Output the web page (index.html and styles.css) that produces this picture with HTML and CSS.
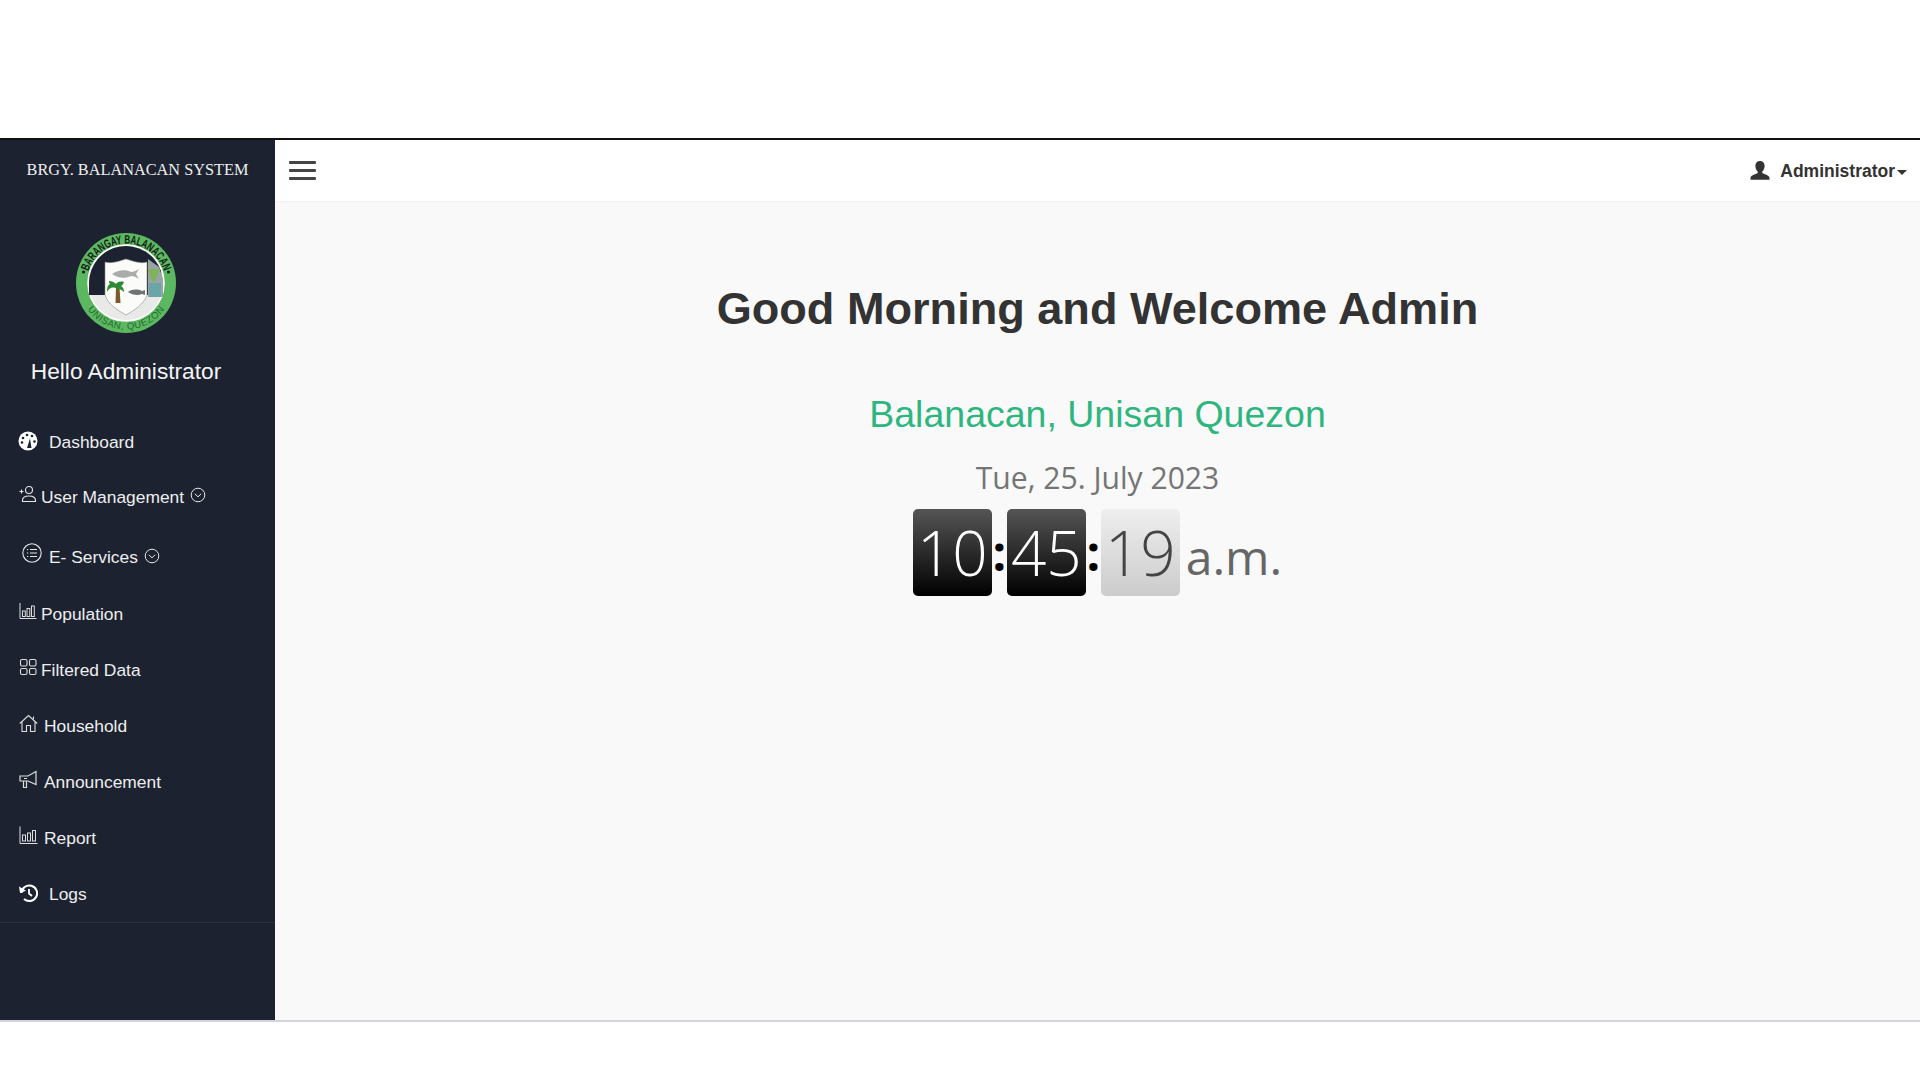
FILE: index.html
```html
<!DOCTYPE html>
<html lang="en">
<head>
    <meta charset="UTF-8">
    <title>Brgy. Balanacan System</title>
    <link rel="stylesheet" href="styles.css">
</head>
<body>

    <div class="app">
        <aside class="sidebar">
            <div class="brand">BRGY. BALANACAN SYSTEM</div>

            <div class="profile">
                <svg class="seal" viewBox="0 0 100 100">
                    <defs>
                        <path id="sealTop" d="M10.500 50a39.500 39.500 0 0 1 79 0"/>
                        <path id="sealBottom" d="M3.500 50a46.500 46.500 0 0 0 93 0"/>
                    </defs>
                    <circle cx="50" cy="50" r="50" fill="#5cb860"/>
                    <circle cx="50" cy="50" r="38" fill="#e9e9e7" stroke="#fff" stroke-width="1.500"/>
                    <path d="M13 62V50a37 37 0 0 1 72 -12l2 24z" fill="#1c2230"/>
                    <path d="M72 26l11 8 4 12 0 18h-15z" fill="#9aa3a6"/>
                    <path d="M72 36h12l-4 10-3 3-2-3z" fill="#7fb35a"/>
                    <path d="M73 50h12v14h-12z" fill="#6aa6a8"/>
                    <path d="M29 29c7 2 14 -1 21 -3 7 2 14 5 21 3v33c-3 9 -12 15 -21 20 -9 -5 -18 -11 -21 -20z" fill="#fbfbfa" stroke="#8a8a86" stroke-width=".6"/>
                    <path d="M36 41c5 -4 14 -5 19 -2 2 0 5 -1 8 -3l-3 5 3 5c-3 -2 -5 -3 -8 -3 -6 3 -14 2 -19 -2z" fill="#a8adab"/>
                    <path d="M52 59c4 -3 10 -3 14 -1l3 -1v5l-3 -1c-4 2 -10 1 -14 -2z" fill="#6f7472"/>
                    <path d="M40 54h3.500l1 16h-5z" fill="#7a5a2a"/>
                    <path d="M41 56c-4 -3 -8 -1 -10 3 0 -5 1 -7 3 -8 -1 -1 -1 -2 -1 -3 3 0 5 1 7 3 1 -2 4 -3 8 -2 -1 2 -1 3 -3 4 2 1 3 3 3 6 -2 -2 -4 -3 -7 -3z" fill="#2e8a34"/>
                    <text class="seal-top"><textPath href="#sealTop" startOffset="50%" text-anchor="middle" textLength="100" lengthAdjust="spacingAndGlyphs">BARANGAY BALANACAN</textPath></text>
                    <text class="seal-bottom"><textPath href="#sealBottom" startOffset="50%" text-anchor="middle" textLength="90">UNISAN, QUEZON</textPath></text>
                    <circle cx="7.500" cy="39" r="1.500" fill="#111"/>
                    <circle cx="92.500" cy="39" r="1.500" fill="#111"/>
                </svg>
                <p class="hello">Hello Administrator</p>
            </div>

            <ul class="menu">
                <li class="menu-item">
                    <svg class="icon icon-wide" viewBox="0 0 20 20"><circle cx="10" cy="10" r="9.500" fill="#fff"/><path d="M9 17l3-9.500 1.500 9.500z" fill="#1c2230"/><circle cx="5" cy="7" r="1.300" fill="#1c2230"/><circle cx="9" cy="4" r="1.300" fill="#1c2230"/><circle cx="14" cy="5" r="1.300" fill="#1c2230"/><circle cx="4" cy="11.500" r="1.300" fill="#1c2230"/><circle cx="16.500" cy="10.500" r="1.300" fill="#1c2230"/></svg>
                    <span>Dashboard</span>
                </li>
                <li class="menu-item item-user">
                    <svg class="icon" viewBox="0 0 18 18" fill="none" stroke="#e6e6e6" stroke-width="1.100"><circle cx="10" cy="5" r="3.500"/><path d="M3.500 16.500v-1c0-3 3-4.500 6.500-4.500s6.500 1.500 6.500 4.500v1z"/><path d="M.5 6.500h4M2.500 4.500v4"/></svg>
                    <span>User Management</span>
                    <svg class="chevron" viewBox="0 0 16 16" fill="none" stroke="#e6e6e6" stroke-width="1"><circle cx="8" cy="8" r="6.800"/><path d="M4.800 6.800l3.200 3 3.200-3"/></svg>
                </li>
                <li class="menu-item item-services">
                    <svg class="icon icon-circle" viewBox="0 0 20 20" fill="none" stroke="#e6e6e6" stroke-width="1.100"><circle cx="10" cy="10" r="9.200"/><path d="M8 6.500h7M8 10h7M8 13.500h7"/><path d="M5 6.500h1.200M5 10h1.200M5 13.500h1.200"/></svg>
                    <span>E- Services</span>
                    <svg class="chevron" viewBox="0 0 16 16" fill="none" stroke="#e6e6e6" stroke-width="1"><circle cx="8" cy="8" r="6.800"/><path d="M4.800 6.800l3.200 3 3.200-3"/></svg>
                </li>
                <li class="menu-item">
                    <svg class="icon" viewBox="0 0 18 18" fill="none" stroke="#ddd" stroke-width="1"><path d="M1 1v15.500h16.500"/><rect x="3.500" y="9" width="2.800" height="5.500"/><rect x="8" y="6.500" width="2.800" height="8"/><rect x="12.500" y="4" width="2.800" height="10.500"/></svg>
                    <span>Population</span>
                </li>
                <li class="menu-item">
                    <svg class="icon" viewBox="0 0 18 18" fill="none" stroke="#ddd" stroke-width="1.100"><rect x="1.500" y="1.500" width="6.500" height="6.500" rx="1.500"/><rect x="10.500" y="1.500" width="6.500" height="6.500" rx="1.500"/><rect x="1.500" y="10.500" width="6.500" height="6" rx="1.500"/><rect x="10.500" y="10.500" width="6.500" height="6" rx="1.500"/></svg>
                    <span>Filtered Data</span>
                </li>
                <li class="menu-item">
                    <svg class="icon icon-mid" viewBox="0 0 19 19" fill="none" stroke="#ddd" stroke-width="1.100"><path d="M.8 9.500L9.500 1.500l8.700 8M3 8v9.500h4.500v-6h4v6H16V8M14.500 5V2.500"/></svg>
                    <span>Household</span>
                </li>
                <li class="menu-item">
                    <svg class="icon icon-mid" viewBox="0 0 19 19" fill="none" stroke="#ddd" stroke-width="1.200"><path d="M1 6h8L17 1.500v13L9 11H1z"/><path d="M4.500 11v6.500h3V11M5 8.500h3"/></svg>
                    <span>Announcement</span>
                </li>
                <li class="menu-item">
                    <svg class="icon icon-mid" viewBox="0 0 19 19" fill="none" stroke="#ddd" stroke-width="1"><path d="M1 .5v17h17.500"/><rect x="3.500" y="9" width="3" height="6"/><rect x="8.500" y="7" width="3" height="8"/><rect x="13.500" y="4.500" width="3" height="10.500"/></svg>
                    <span>Report</span>
                </li>
                <li class="menu-item">
                    <svg class="icon icon-wide" viewBox="0 0 20 20" fill="none" stroke="#fff" stroke-width="2"><path d="M3.500 10a7.800 7.800 0 1 1 2.500 6"/><path d="M1 3.500l1 6.500 6-2.200z" fill="#fff" stroke="none"/><path d="M11 6v4.500l3 2.500" stroke-width="1.800"/></svg>
                    <span>Logs</span>
                </li>
            </ul>
        </aside>

        <div class="content">
            <header class="topbar">
                <button class="menu-toggle" aria-label="Menu"><span></span><span></span><span></span></button>
                <div class="user-menu">
                    <svg class="user-icon" viewBox="0 0 20 19"><path d="M10 0c3 0 4.600 2.300 4.600 5 0 2.300-1 4.500-2.300 5.500v1.800c2.700.9 6.700 2 7.200 4.500v2H.5v-2c.5-2.500 4.500-3.600 7.200-4.500v-1.800C6.400 9.500 5.400 7.300 5.400 5 5.400 2.300 7 0 10 0z" fill="#333"/></svg>
                    <span class="user-name">Administrator</span>
                    <span class="caret"></span>
                </div>
            </header>

            <main class="welcome">
                <h1>Good Morning and Welcome Admin</h1>
                <h2>Balanacan, Unisan Quezon</h2>
                <div class="date">Tue, 25. July 2023</div>
                <div class="clock">
                    <span class="digits">10</span>
                    <span class="colon">:</span>
                    <span class="digits">45</span>
                    <span class="colon">:</span>
                    <span class="digits seconds">19</span>
                    <span class="ampm">a.m.</span>
                </div>
            </main>
        </div>
    </div>

</body>
</html>
```

FILE: styles.css
```css
body {
    margin: 0;
    padding-top: 138px;
    font-family: 'Liberation Sans', Arial, sans-serif;
    background: white;
}
.app {
    display: flex;
    height: 884px;
    box-sizing: border-box;
    border-top: 2px solid #111;
    border-bottom: 2px solid #d2d3de;
}
.sidebar {
    width: 275px;
    background: #1c2230;
    color: #f2f2f2;
}
.brand {
    height: 60px;
    line-height: 60px;
    text-align: center;
    font-family: 'Liberation Serif', serif;
    font-size: 16.3px;
    color: #eee;
}
.profile {
    width: 252px;
    display: flex;
    flex-direction: column;
    align-items: center;
    padding-top: 33px;
}
.seal {
    width: 100px;
    height: 100px;
}
.seal-top {
    font-size: 12px;
    font-weight: bold;
    fill: #15201a;
}
.seal-bottom {
    font-size: 9.5px;
    fill: #1f6a2d;
}
.hello {
    margin: 23px 0 0;
    font-size: 22.7px;
    line-height: 30px;
    color: #f5f5f5;
}
.menu {
    list-style: none;
    margin: 28px 0 0;
    padding: 0 0 0 19px;
    height: 508px;
    border-bottom: 1px solid #2b303c;
}
.menu-item {
    display: flex;
    align-items: center;
    height: 56px;
    font-size: 17.4px;
    color: #eee;
}
.item-user {
    height: 54px;
}
.item-services {
    height: 62px;
    padding-top: 5px;
    box-sizing: border-box;
}
.icon {
    width: 18px;
    height: 18px;
    margin: 0 4px 6px 0;
    flex-shrink: 0;
}
.icon-wide {
    width: 20px;
    height: 20px;
    margin: 0 11px 2px -1px;
}
.icon-circle {
    width: 20px;
    height: 20px;
    margin: 0 7px 10px 3px;
}
.icon-mid {
    width: 19px;
    height: 19px;
    margin: 0 6px 6px 0;
}
.chevron {
    width: 16px;
    height: 16px;
    margin: 0 0 4px 6px;
}
.content {
    flex: 1;
    background: #f9f9f9;
}
.topbar {
    height: 61px;
    background: white;
    border-bottom: 1px solid #f1f1f1;
    display: flex;
    align-items: center;
    justify-content: space-between;
    padding: 0 13px 0 14px;
}
.menu-toggle {
    background: none;
    border: none;
    padding: 0;
    width: 27px;
    display: flex;
    flex-direction: column;
    gap: 5px;
}
.menu-toggle span {
    display: block;
    height: 3px;
    border-radius: 1px;
    background: #444;
}
.user-menu {
    display: flex;
    align-items: center;
    color: #333;
}
.user-icon {
    width: 20px;
    height: 19px;
    margin: 0 10px 1px 0;
}
.user-name {
    font-size: 17.5px;
    font-weight: bold;
    line-height: 22px;
}
.caret {
    width: 0;
    height: 0;
    margin: 3px 0 0 2px;
    border-top: 5px solid #333;
    border-left: 5px solid transparent;
    border-right: 5px solid transparent;
}
.welcome {
    display: flex;
    flex-direction: column;
    align-items: center;
}
h1 {
    margin: 82px 0 0;
    font-size: 45.1px;
    line-height: 50px;
    color: #333;
}
h2 {
    margin: 59px 0 0;
    font-size: 37.5px;
    line-height: 42px;
    font-weight: normal;
    color: #2fb67f;
}
.date {
    margin-top: 23px;
    font-family: 'Open Sans', sans-serif;
    font-size: 30.1px;
    line-height: 40px;
    color: #757575;
}
.clock {
    display: flex;
    align-items: flex-start;
    margin-top: 11px;
    font-family: 'Open Sans', sans-serif;
    height: 88px;
}
.digits {
    width: 79px;
    height: 87px;
    border-radius: 5px;
    background: linear-gradient(#555, #000);
    color: white;
    font-size: 62px;
    font-weight: 350;
    line-height: 87px;
    text-align: center;
}
.seconds {
    background: linear-gradient(#eee, #ccc);
    color: #444;
}
.colon {
    width: 15px;
    font-size: 48px;
    font-weight: 700;
    line-height: 87px;
    text-align: center;
    color: black;
}
.ampm {
    margin-left: 6px;
    font-size: 48px;
    line-height: 96px;
    color: #666;
}
```
